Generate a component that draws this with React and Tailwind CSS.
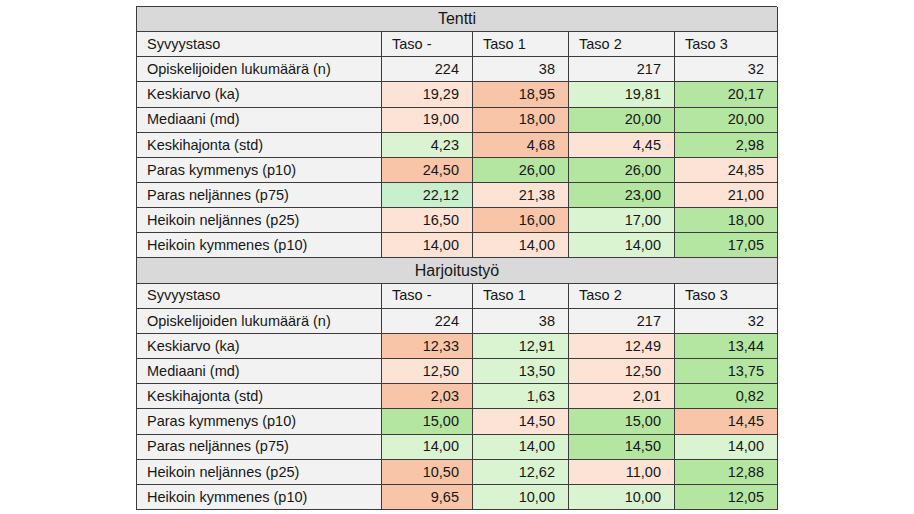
import React from "react";

const C = {
  lp: "bg-[#fde3d6]",
  s: "bg-[#f8c5a9]",
  lg: "bg-[#daf3d1]",
  g: "bg-[#b4e5a1]",
  m: "bg-[#c8f0cf]",
  w: "bg-[#f2f2f2]",
};

const sections = [
  {
    title: "Tentti",
    n: ["224", "38", "217", "32"],
    rows: [
      ["Keskiarvo (ka)", [["19,29", "lp"], ["18,95", "s"], ["19,81", "lg"], ["20,17", "g"]]],
      ["Mediaani (md)", [["19,00", "lp"], ["18,00", "s"], ["20,00", "g"], ["20,00", "g"]]],
      ["Keskihajonta (std)", [["4,23", "lg"], ["4,68", "s"], ["4,45", "lp"], ["2,98", "g"]]],
      ["Paras kymmenys (p10)", [["24,50", "s"], ["26,00", "g"], ["26,00", "g"], ["24,85", "lp"]]],
      ["Paras neljännes (p75)", [["22,12", "m"], ["21,38", "lp"], ["23,00", "g"], ["21,00", "lp"]]],
      ["Heikoin neljännes (p25)", [["16,50", "lp"], ["16,00", "s"], ["17,00", "lg"], ["18,00", "g"]]],
      ["Heikoin kymmenes (p10)", [["14,00", "lp"], ["14,00", "lp"], ["14,00", "lg"], ["17,05", "g"]]],
    ],
  },
  {
    title: "Harjoitustyö",
    n: ["224", "38", "217", "32"],
    rows: [
      ["Keskiarvo (ka)", [["12,33", "s"], ["12,91", "lg"], ["12,49", "lp"], ["13,44", "g"]]],
      ["Mediaani (md)", [["12,50", "lp"], ["13,50", "lg"], ["12,50", "lp"], ["13,75", "g"]]],
      ["Keskihajonta (std)", [["2,03", "s"], ["1,63", "lg"], ["2,01", "lp"], ["0,82", "g"]]],
      ["Paras kymmenys (p10)", [["15,00", "g"], ["14,50", "lp"], ["15,00", "g"], ["14,45", "s"]]],
      ["Paras neljännes (p75)", [["14,00", "lg"], ["14,00", "lg"], ["14,50", "g"], ["14,00", "lg"]]],
      ["Heikoin neljännes (p25)", [["10,50", "s"], ["12,62", "lg"], ["11,00", "lp"], ["12,88", "g"]]],
      ["Heikoin kymmenes (p10)", [["9,65", "s"], ["10,00", "lg"], ["10,00", "lg"], ["12,05", "g"]]],
    ],
  },
];

const cell = "border-r border-b border-[#3c3c3c] flex items-center";

function Label({ children }) {
  return <div className={`${cell} ${C.w} pl-[10px]`}>{children}</div>;
}
function Num({ children, c }) {
  return <div className={`${cell} ${C[c]} justify-end pr-[13px]`}>{children}</div>;
}
function Head({ children }) {
  return <div className={`${cell} ${C.w} pl-[10px]`}>{children}</div>;
}

export default function App() {
  return (
    <div className="w-[914px] h-[514px] bg-white pt-[6px] pl-[136px]">
      <div
        className="grid grid-cols-[245px_91px_96px_106px_103px] grid-rows-[repeat(20,minmax(0,1fr))] w-[641px] h-[504px] border-l border-t border-[#3c3c3c] text-[14.5px] text-[#161616] leading-none"
        style={{ fontFamily: '"Liberation Sans", Arial, sans-serif' }}
      >
        {sections.map((sec) => (
          <React.Fragment key={sec.title}>
            <div className={`${cell} col-span-5 justify-center bg-[#d9d9d9] text-[16px]`}>{sec.title}</div>
            <Label>Syvyystaso</Label>
            <Head>Taso -</Head>
            <Head>Taso 1</Head>
            <Head>Taso 2</Head>
            <Head>Taso 3</Head>
            <Label>Opiskelijoiden lukumäärä (n)</Label>
            {sec.n.map((v, i) => (
              <Num key={i} c="w">{v}</Num>
            ))}
            {sec.rows.map(([label, vals]) => (
              <React.Fragment key={label}>
                <Label>{label}</Label>
                {vals.map(([v, c], i) => (
                  <Num key={i} c={c}>{v}</Num>
                ))}
              </React.Fragment>
            ))}
          </React.Fragment>
        ))}
      </div>
    </div>
  );
}
